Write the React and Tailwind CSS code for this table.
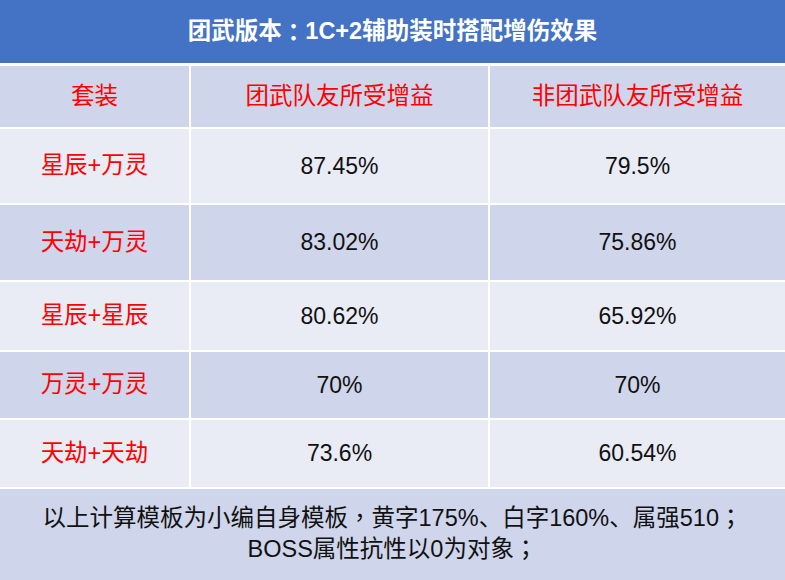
const rows = [
    { set: '星辰+万灵', team: '87.45%', other: '79.5%', h: 'h-[74px]', bg: 'bg-[#e9ebf5]' },
    { set: '天劫+万灵', team: '83.02%', other: '75.86%', h: 'h-[75px]', bg: 'bg-[#cfd5ea]' },
    { set: '星辰+星辰', team: '80.62%', other: '65.92%', h: 'h-[68px]', bg: 'bg-[#e9ebf5]' },
    { set: '万灵+万灵', team: '70%', other: '70%', h: 'h-[66px]', bg: 'bg-[#cfd5ea]' },
    { set: '天劫+天劫', team: '73.6%', other: '60.54%', h: 'h-[67px]', bg: 'bg-[#e9ebf5]' },
];

const font = { fontFamily: '"Liberation Sans", Arial, "Noto Sans CJK SC", sans-serif' };

// full-width punctuation drawn centred in its box, as in the reference
const P = ({ children }) => (
    <span style={{ fontFamily: '"Noto Sans CJK TC", sans-serif' }}>{children}</span>
);

const App = () => {
    return (
        <div className="w-[785px] h-[580px] bg-white flex flex-col text-[23px]" style={font}>
            {/* Title */}
            <div className="h-[63px] bg-[#4472c4] flex items-center justify-center text-white font-bold text-[23.5px]">
                团武版本<P>：</P>1C+2辅助装时搭配增伤效果
            </div>

            <div className="mt-[3px] flex flex-col gap-[2px]">
                {/* Header row */}
                <div className="grid grid-cols-[189px_297px_295px] gap-x-[2px] h-[61px] text-[23.5px]">
                    <div className="bg-[#cfd5ea] flex items-center justify-center text-[#ff0000]">套装</div>
                    <div className="bg-[#cfd5ea] flex items-center justify-center text-[#ff0000]">团武队友所受增益</div>
                    <div className="bg-[#cfd5ea] flex items-center justify-center text-[#ff0000]">非团武队友所受增益</div>
                </div>

                {/* Data rows */}
                {rows.map((r) => (
                    <div key={r.set} className={`grid grid-cols-[189px_297px_295px] gap-x-[2px] ${r.h}`}>
                        <div className={`${r.bg} flex items-center justify-center text-[#ff0000] text-[23.5px]`}>{r.set}</div>
                        <div className={`${r.bg} flex items-center justify-center text-[#111]`}>{r.team}</div>
                        <div className={`${r.bg} flex items-center justify-center text-[#111]`}>{r.other}</div>
                    </div>
                ))}

                {/* Footer note */}
                <div className="h-[91px] bg-[#cfd5ea] flex flex-col items-center justify-center text-[#111] text-[23.5px] leading-[29px] pb-[4px]">
                    <div>以上计算模板为小编自身模板<P>，</P>黄字175%、白字160%、属强510<P>；</P></div>
                    <div>BOSS属性抗性以0为对象<P>；</P></div>
                </div>
            </div>
        </div>
    );
};

export default App;
